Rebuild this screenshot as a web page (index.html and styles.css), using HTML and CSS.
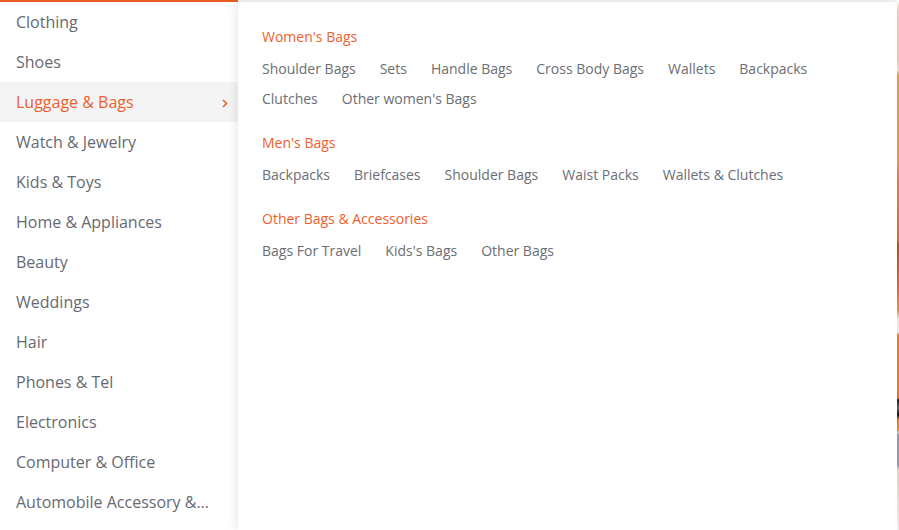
FILE: index.html
```html
<!DOCTYPE html>
<html>
<head>
<meta charset="utf-8">
<link rel="stylesheet" href="styles.css">
</head>
<body>
<div class="page">
  <ul class="menu">
    <li class="item">Clothing</li>
    <li class="item">Shoes</li>
    <li class="item active">Luggage &amp; Bags
      <svg class="chev" width="6" height="9" viewBox="0 0 6 9"><path d="M1 1 L4.5 4.5 L1 8" fill="none" stroke="#f0602c" stroke-width="1.6"/></svg>
    </li>
    <li class="item">Watch &amp; Jewelry</li>
    <li class="item">Kids &amp; Toys</li>
    <li class="item">Home &amp; Appliances</li>
    <li class="item">Beauty</li>
    <li class="item">Weddings</li>
    <li class="item">Hair</li>
    <li class="item">Phones &amp; Tel</li>
    <li class="item">Electronics</li>
    <li class="item">Computer &amp; Office</li>
    <li class="item">Automobile Accessory &amp;...</li>
  </ul>
  <div class="panel-wrap">
    <div class="panel">
      <div class="group">
        <div class="heading">Women's Bags</div>
        <div class="links">
          <span>Shoulder Bags</span><span>Sets</span><span>Handle Bags</span><span>Cross Body Bags</span><span>Wallets</span><span>Backpacks</span><span>Clutches</span><span>Other women's Bags</span>
        </div>
      </div>
      <div class="group">
        <div class="heading">Men's Bags</div>
        <div class="links">
          <span>Backpacks</span><span>Briefcases</span><span>Shoulder Bags</span><span>Waist Packs</span><span>Wallets &amp; Clutches</span>
        </div>
      </div>
      <div class="group">
        <div class="heading">Other Bags &amp; Accessories</div>
        <div class="links">
          <span>Bags For Travel</span><span>Kids's Bags</span><span>Other Bags</span>
        </div>
      </div>
    </div>
  </div>
  <div class="edge"></div>
</div>
</body>
</html>
```
FILE: styles.css
```css
html, body {
  margin: 0;
  padding: 0;
  background: #fff;
}
body {
  font-family: "Open Sans", "Liberation Sans", sans-serif;
  overflow: hidden;
}
.page {
  display: flex;
  width: 899px;
  height: 530px;
}
.menu {
  list-style: none;
  margin: 0;
  padding: 0;
  width: 238px;
  flex: none;
  border-top: 2px solid #ea5b24;
  background: #fff;
}
.item {
  display: flex;
  align-items: center;
  justify-content: space-between;
  height: 40px;
  padding: 0 10px 0 16px;
  font-size: 16px;
  color: #666a70;
  white-space: nowrap;
}
.item.active {
  background: #f4f4f4;
  color: #f05e2e;
}
.chev {
  display: block;
  margin-top: 2px;
}
.panel-wrap {
  flex: 1;
  background: #f3f3f3;
  padding-top: 2px;
  display: flex;
  position: relative;
  z-index: 1;
}
.panel {
  flex: 1;
  background: #fff;
  padding: 25px 24px 0 24px;
  box-shadow: -3px 0 8px rgba(0,0,0,0.08);
}
.group {
  margin-bottom: 19px;
}
.heading {
  font-size: 14px;
  line-height: 20px;
  color: #f0602c;
  margin-bottom: 7px;
}
.links {
  display: flex;
  flex-wrap: wrap;
  column-gap: 24px;
  font-size: 14px;
  line-height: 30px;
  color: #6b6e73;
  width: 580px;
}
.edge {
  width: 2px;
  flex: none;
  background: linear-gradient(to bottom, #fff 0, #f7c9c0 10px, #f2c4b8 60px, #fbe3d8 70px, #e8a040 75px, #e89a3c 160px, #e07850 180px, #d86c40 240px, #b05020 245px, #e86a30 290px, #e89040 310px, #f0ece8 320px, #f0ece8 332px, #f07818 335px, #f07818 398px, #202020 400px, #606060 408px, #101010 415px, #f08020 420px, #f08020 430px, #d0d0d0 432px, #9a98a8 435px, #9a98a8 465px, #e0d8d0 470px, #f0eeee 530px);
}
```
